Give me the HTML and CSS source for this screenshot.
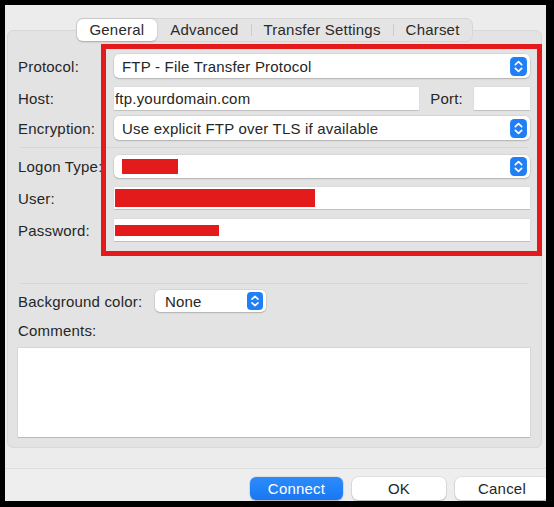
FILE: index.html
```html
<!DOCTYPE html>
<html>
<head>
<meta charset="utf-8">
<link rel="stylesheet" href="styles.css">
</head>
<body>
<div class="window">
  <div class="tabbar">
    <div class="seg">
      <span class="tab sel">General</span>
      <span class="tab">Advanced</span>
      <span class="tab sep">Transfer Settings</span>
      <span class="tab sep">Charset</span>
    </div>
  </div>
  <div class="box">
    <div class="row h24 mt23">
      <span class="label">Protocol:</span>
      <div class="select grow">FTP - File Transfer Protocol
        <svg class="stepper" viewBox="0 0 16 18" width="17" height="19"><rect x="0" y="0" width="16" height="18" rx="4" fill="#1f7ff7"/><path d="M5 7.2 L8 4.4 L11 7.2 M5 10.8 L8 13.6 L11 10.8" fill="none" stroke="#fff" stroke-width="1.6" stroke-linecap="round" stroke-linejoin="round"/></svg>
      </div>
    </div>
    <div class="row h23 mt9">
      <span class="label">Host:</span>
      <div class="input grow">ftp.yourdomain.com</div>
      <span class="port-label">Port:</span>
      <div class="input port"></div>
    </div>
    <div class="row h24 mt6">
      <span class="label">Encryption:</span>
      <div class="select grow">Use explicit FTP over TLS if available
        <svg class="stepper" viewBox="0 0 16 18" width="17" height="19"><rect x="0" y="0" width="16" height="18" rx="4" fill="#1f7ff7"/><path d="M5 7.2 L8 4.4 L11 7.2 M5 10.8 L8 13.6 L11 10.8" fill="none" stroke="#fff" stroke-width="1.6" stroke-linecap="round" stroke-linejoin="round"/></svg>
      </div>
    </div>
    <div class="hr mt7"></div>
    <div class="row h23 mt7">
      <span class="label">Logon Type:</span>
      <div class="select grow"><span class="redact r-logon"></span>
        <svg class="stepper" viewBox="0 0 16 18" width="17" height="19"><rect x="0" y="0" width="16" height="18" rx="4" fill="#1f7ff7"/><path d="M5 7.2 L8 4.4 L11 7.2 M5 10.8 L8 13.6 L11 10.8" fill="none" stroke="#fff" stroke-width="1.6" stroke-linecap="round" stroke-linejoin="round"/></svg>
      </div>
    </div>
    <div class="row h22 mt9">
      <span class="label">User:</span>
      <div class="input grow"><span class="redact r-user"></span></div>
    </div>
    <div class="row h22 mt10">
      <span class="label">Password:</span>
      <div class="input grow"><span class="redact r-pass"></span></div>
    </div>
    <div class="hr mt42"></div>
    <div class="row h22 mt6">
      <span class="label wide">Background color:</span>
      <div class="select bgsel">None
        <svg class="stepper" viewBox="0 0 16 18" width="16" height="18"><rect x="0" y="0" width="16" height="18" rx="4" fill="#1f7ff7"/><path d="M5 7.2 L8 4.4 L11 7.2 M5 10.8 L8 13.6 L11 10.8" fill="none" stroke="#fff" stroke-width="1.6" stroke-linecap="round" stroke-linejoin="round"/></svg>
      </div>
    </div>
    <div class="row h20 mt8">
      <span class="label">Comments:</span>
    </div>
    <div class="textarea"></div>
  </div>
  <div class="footer">
    <button class="btn primary">Connect</button>
    <button class="btn">OK</button>
    <button class="btn">Cancel</button>
  </div>
  <div class="annot"></div>
</div>
</body>
</html>
```

FILE: styles.css
```css
html, body {
  margin: 0;
  padding: 0;
  background: #000;
  width: 554px;
  height: 507px;
  overflow: hidden;
}

.window {
  position: relative;
  margin: 5px 8px 0 5px;
  height: 496px;
  background: #ececec;
  overflow: hidden;
  font-family: "Liberation Sans", Arial, sans-serif;
  font-size: 15px;
  letter-spacing: 0.2px;
  color: #262626;
}

.tabbar {
  position: relative;
  z-index: 1;
  display: flex;
  justify-content: center;
  padding: 13px 4px 0 2px;
}

.seg {
  display: flex;
  height: 22px;
  background: #e4e4e4;
  border: 1px solid #d6d6d6;
  border-radius: 7px;
}

.tab {
  position: relative;
  padding: 0 12.5px;
  line-height: 22px;
  color: #2a2a2a;
}

.tab.sel {
  background: #fff;
  border-radius: 6px;
  box-shadow: 0 0.5px 2px rgba(0, 0, 0, 0.22);
  margin: 0 1px 0 0;
}

.tab.sep::before {
  content: "";
  position: absolute;
  left: 0;
  top: 5px;
  bottom: 5px;
  width: 1px;
  background: #cccccc;
}

.box {
  margin: -12px 4px 0 2px;
  background: #e3e3e3;
  border: 1px solid #d8d8d8;
  border-radius: 6px;
  padding: 0 11px 10px 10px;
}

.row {
  display: flex;
  align-items: center;
}

.h20 { height: 20px; }
.h22 { height: 22px; }
.h23 { height: 23px; }
.h24 { height: 24px; }
.mt6 { margin-top: 6px; }
.mt7 { margin-top: 7px; }
.mt8 { margin-top: 8px; }
.mt9 { margin-top: 9px; }
.mt10 { margin-top: 10px; }
.mt23 { margin-top: 23px; }
.mt42 { margin-top: 42px; }

.label {
  width: 96px;
  flex: none;
  white-space: nowrap;
  color: #262626;
}

.label.wide {
  width: 137px;
}

.grow {
  flex: 1;
}

.select {
  position: relative;
  height: 100%;
  display: flex;
  align-items: center;
  background: #fff;
  border-radius: 5px;
  padding-left: 8px;
  box-sizing: border-box;
  box-shadow: 0 0 0 0.5px rgba(0, 0, 0, 0.1), 0 1px 1.5px rgba(0, 0, 0, 0.18);
  white-space: nowrap;
}

.stepper {
  margin-left: auto;
  margin-right: 3px;
  flex: none;
}

.bgsel {
  width: 111px;
  padding-left: 10px;
}

.input {
  height: 100%;
  display: flex;
  align-items: center;
  background: #fff;
  padding-left: 1px;
  box-sizing: border-box;
  box-shadow: 0 1px 0 rgba(0, 0, 0, 0.13), 0 0 0 0.5px rgba(0, 0, 0, 0.05);
}

.port-label {
  margin: 0 11px 0 11px;
}

.input.port {
  width: 56px;
  flex: none;
}

.redact {
  display: block;
  background: #e31b1b;
}

.r-logon { width: 56px; height: 15px; }
.r-user { width: 200px; height: 18px; }
.r-pass { width: 104px; height: 11px; margin-bottom: -1px; }

.hr {
  height: 1px;
  background: #d6d6d6;
  margin-left: 2px;
  margin-right: 2px;
}

.textarea {
  margin-top: 8px;
  height: 89px;
  background: #fff;
  box-shadow: 0 0 0 0.5px rgba(0, 0, 0, 0.1), 0 1px 0 rgba(0, 0, 0, 0.14);
}

.footer {
  margin-top: 20px;
  border-top: 1px solid #dedede;
  background: #eeeeee;
  height: 40px;
  display: flex;
  gap: 9px;
  padding: 8px 0 0 245px;
  box-sizing: border-box;
}

.btn {
  flex: none;
  width: 94px;
  height: 23px;
  border: none;
  border-radius: 6px;
  background: #fff;
  font-family: "Liberation Sans", Arial, sans-serif;
  font-size: 15px;
  letter-spacing: 0.2px;
  color: #262626;
  padding: 0;
  box-shadow: 0 0 0 0.5px rgba(0, 0, 0, 0.12), 0 1px 1.5px rgba(0, 0, 0, 0.2);
}

.btn.primary {
  width: 93px;
  background: linear-gradient(#2d8cfb, #1877f2);
  color: #fff;
}

.annot {
  position: absolute;
  left: 96px;
  top: 39px;
  width: 441px;
  height: 212px;
  box-sizing: border-box;
  border: 5px solid #e4191c;
  pointer-events: none;
}
```
